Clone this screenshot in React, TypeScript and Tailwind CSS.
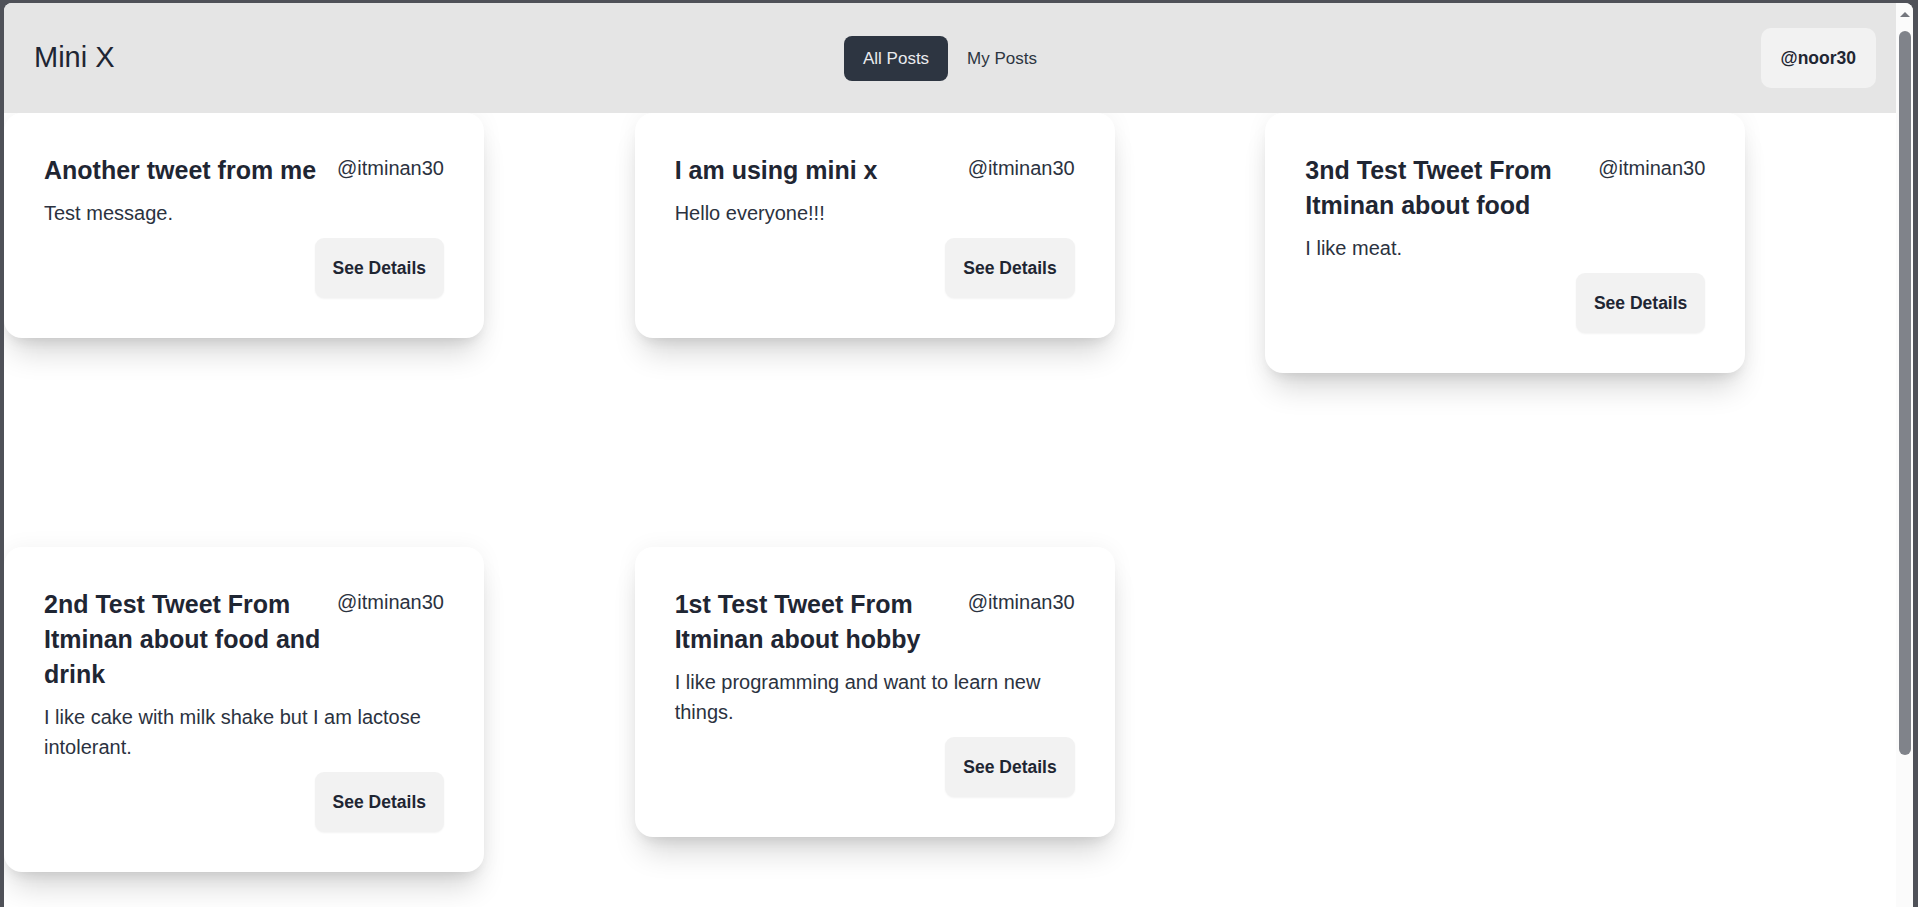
const posts = [
  { title: 'Another tweet from me', body: 'Test message.' },
  { title: 'I am using mini x', body: 'Hello everyone!!!' },
  { title: '3nd Test Tweet From Itminan about food', body: 'I like meat.' },
  {
    title: '2nd Test Tweet From Itminan about food and drink',
    body: 'I like cake with milk shake but I am lactose intolerant.',
  },
  {
    title: '1st Test Tweet From Itminan about hobby',
    body: 'I like programming and want to learn new things.',
  },
];

function PostCard({ title, body }: { title: string; body: string }) {
  return (
    <div className="w-[480px] rounded-[18px] bg-white p-[40px] shadow-[0_22px_30px_-8px_rgba(0,0,0,0.16),0_8px_12px_-6px_rgba(0,0,0,0.08),0_0_22px_rgba(0,0,0,0.05)]">
      <div className="flex items-start justify-between gap-[8px]">
        <h2 className="flex-1 text-[25px] leading-[35px] font-bold text-[#1f2633]">{title}</h2>
        <span className="shrink-0 text-[20px] leading-[30px] text-[#2b3240]">@itminan30</span>
      </div>
      <p className="mt-[10px] text-[20px] leading-[30px] text-[#2b3240]">{body}</p>
      <div className="mt-[10px] flex justify-end">
        <button className="h-[60px] rounded-[9px] bg-[#f2f2f2] px-[18px] text-[17.5px] font-bold text-[#1f2633] shadow-[0_1px_2px_rgba(0,0,0,0.05)]">
          See Details
        </button>
      </div>
    </div>
  );
}

export default function App() {
  return (
    <div
      className="h-screen w-full overflow-hidden bg-[#4f5158] pt-[3px] pl-[4px] pr-[5px]"
      style={{ fontFamily: '"Liberation Sans", Arial, sans-serif' }}
    >
      <div className="flex h-full overflow-hidden rounded-t-[8px] bg-white">
        <div className="min-w-0 flex-1">
          {/* Header */}
          <header className="relative z-10 grid h-[110px] grid-cols-3 items-center bg-[#e5e5e5] px-[20px]">
            <div className="pl-[10px] text-[29px] text-[#1f2633]">Mini X</div>
            <nav className="flex justify-center">
              <button className="rounded-[8px] bg-[#2d3541] px-[19px] py-[10px] text-[17px] leading-[25px] text-[#e9ebee]">
                All Posts
              </button>
              <button className="rounded-[8px] px-[19px] py-[10px] text-[17px] leading-[25px] text-[#2d3541]">
                My Posts
              </button>
            </nav>
            <div className="flex justify-end">
              <button className="h-[60px] rounded-[10px] bg-[#f2f2f2] px-[20px] text-[17.5px] font-bold text-[#1f2633]">
                @noor30
              </button>
            </div>
          </header>

          {/* Posts */}
          <main className="grid grid-cols-3 items-start gap-y-[174px]">
            {posts.map((p) => (
              <PostCard key={p.title} title={p.title} body={p.body} />
            ))}
          </main>
        </div>

        {/* scrollbar */}
        <div className="flex w-[17px] flex-col items-center bg-[#fbfbfb] pt-[9px]">
          <div className="h-0 w-0 border-x-[5px] border-b-[5px] border-x-transparent border-b-[#74777e]" />
          <div className="mt-[14px] h-[724px] w-[12px] rounded-full bg-[#80838a]" />
        </div>
      </div>
    </div>
  );
}
